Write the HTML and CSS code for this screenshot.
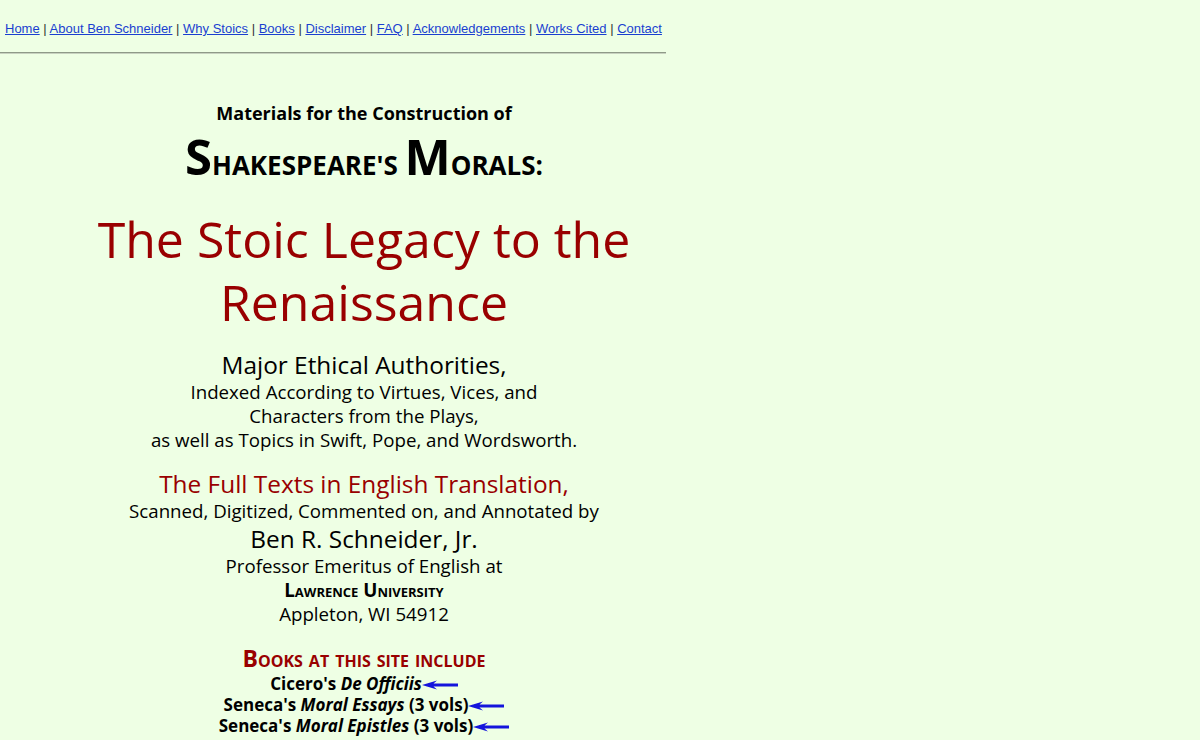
FILE: index.html
```html
<!DOCTYPE html>
<html>
<head>
<meta charset="utf-8">
<link rel="stylesheet" href="styles.css">
</head>
<body>
<div class="page">
  <nav class="nav">
    <a href="#">Home</a> | <a href="#">About Ben Schneider</a> | <a href="#">Why Stoics</a> | <a href="#">Books</a> | <a href="#">Disclaimer</a> | <a href="#">FAQ</a> | <a href="#">Acknowledgements</a> | <a href="#">Works Cited</a> | <a href="#">Contact</a>
  </nav>
  <div class="rule"></div>
  <main class="main">
    <p class="pre">Materials for the Construction of</p>
    <h1 class="morals"><span class="ini">S</span>HAKESPEARE'S <span class="ini">M</span>ORALS:</h1>
    <h2 class="title">The Stoic Legacy to the Renaissance</h2>
    <div class="block1">
      <div class="big">Major Ethical Authorities,</div>
      <div class="med">Indexed According to Virtues, Vices, and<br>Characters from the Plays,<br>as well as Topics in Swift, Pope, and Wordsworth.</div>
    </div>
    <div class="block2">
      <div class="big red">The Full Texts in English Translation,</div>
      <div class="med">Scanned, Digitized, Commented on, and Annotated by</div>
      <div class="big name">Ben R. Schneider, Jr.</div>
      <div class="med">Professor Emeritus of English at</div>
      <div class="univ">Lawrence University</div>
      <div class="med">Appleton, WI 54912</div>
    </div>
    <div class="books">
      <div class="books-h">Books at this site include</div>
      <div class="book">Cicero's <i>De Officiis</i><svg class="arrow" viewBox="0 0 36 10" width="36" height="10"><path d="M0 5 L15 0.5 L11.5 3.4 L36 3.4 L36 6.6 L11.5 6.6 L15 9.5 Z" fill="#1414dc"/></svg></div>
      <div class="book">Seneca's <i>Moral Essays</i> (3 vols)<svg class="arrow" viewBox="0 0 36 10" width="36" height="10"><path d="M0 5 L15 0.5 L11.5 3.4 L36 3.4 L36 6.6 L11.5 6.6 L15 9.5 Z" fill="#1414dc"/></svg></div>
      <div class="book">Seneca's <i>Moral Epistles</i> (3 vols)<svg class="arrow" viewBox="0 0 36 10" width="36" height="10"><path d="M0 5 L15 0.5 L11.5 3.4 L36 3.4 L36 6.6 L11.5 6.6 L15 9.5 Z" fill="#1414dc"/></svg></div>
    </div>
  </main>
</div>
</body>
</html>
```
FILE: styles.css
```css
html, body {
  margin: 0;
  padding: 0;
  background: #eeffe4;
}
body {
  font-family: "Open Sans", "Noto Sans", sans-serif;
  color: #000;
}
.page {
  width: 666px;
}
.nav {
  font-family: "Liberation Sans", Arial, sans-serif;
  font-size: 13px;
  line-height: 16px;
  padding: 21px 0 0 5px;
  height: 24px;
  color: #333;
  white-space: nowrap;
}
.nav a {
  color: #1a3fd0;
  text-decoration: underline;
}
.rule {
  border-top: 1px solid #8f9a88;
  border-bottom: 1px solid #c8d2c0;
  margin-top: 7px;
}
.main {
  width: 728px;
  text-align: center;
  padding-top: 47px;
}
.pre {
  margin: 0;
  font-weight: bold;
  font-size: 18px;
  line-height: 24px;
}
.morals {
  margin: 4px 0 0 0;
  font-weight: bold;
  font-size: 26px;
  line-height: 54px;
}
.ini {
  font-size: 49px;
}
.title {
  margin: 16px 0 0 0;
  font-weight: normal;
  color: #990000;
  font-size: 50px;
  line-height: 63px;
}
.block1 {
  margin-top: 16px;
}
.big {
  font-size: 24.4px;
  line-height: 30px;
}
.med {
  font-size: 18.7px;
  line-height: 24px;
}
.red {
  color: #990000;
}
.block2 {
  margin-top: 17px;
}
.name {
  line-height: 31px;
}
.univ {
  font-variant: small-caps;
  font-weight: bold;
  font-size: 18.7px;
  line-height: 24px;
}
.books {
  margin-top: 17px;
}
.books-h {
  color: #990000;
  font-variant: small-caps;
  font-weight: bold;
  font-size: 23px;
  line-height: 30px;
}
.book {
  font-weight: bold;
  font-size: 17px;
  line-height: 21px;
}
.arrow {
  vertical-align: middle;
}
```
